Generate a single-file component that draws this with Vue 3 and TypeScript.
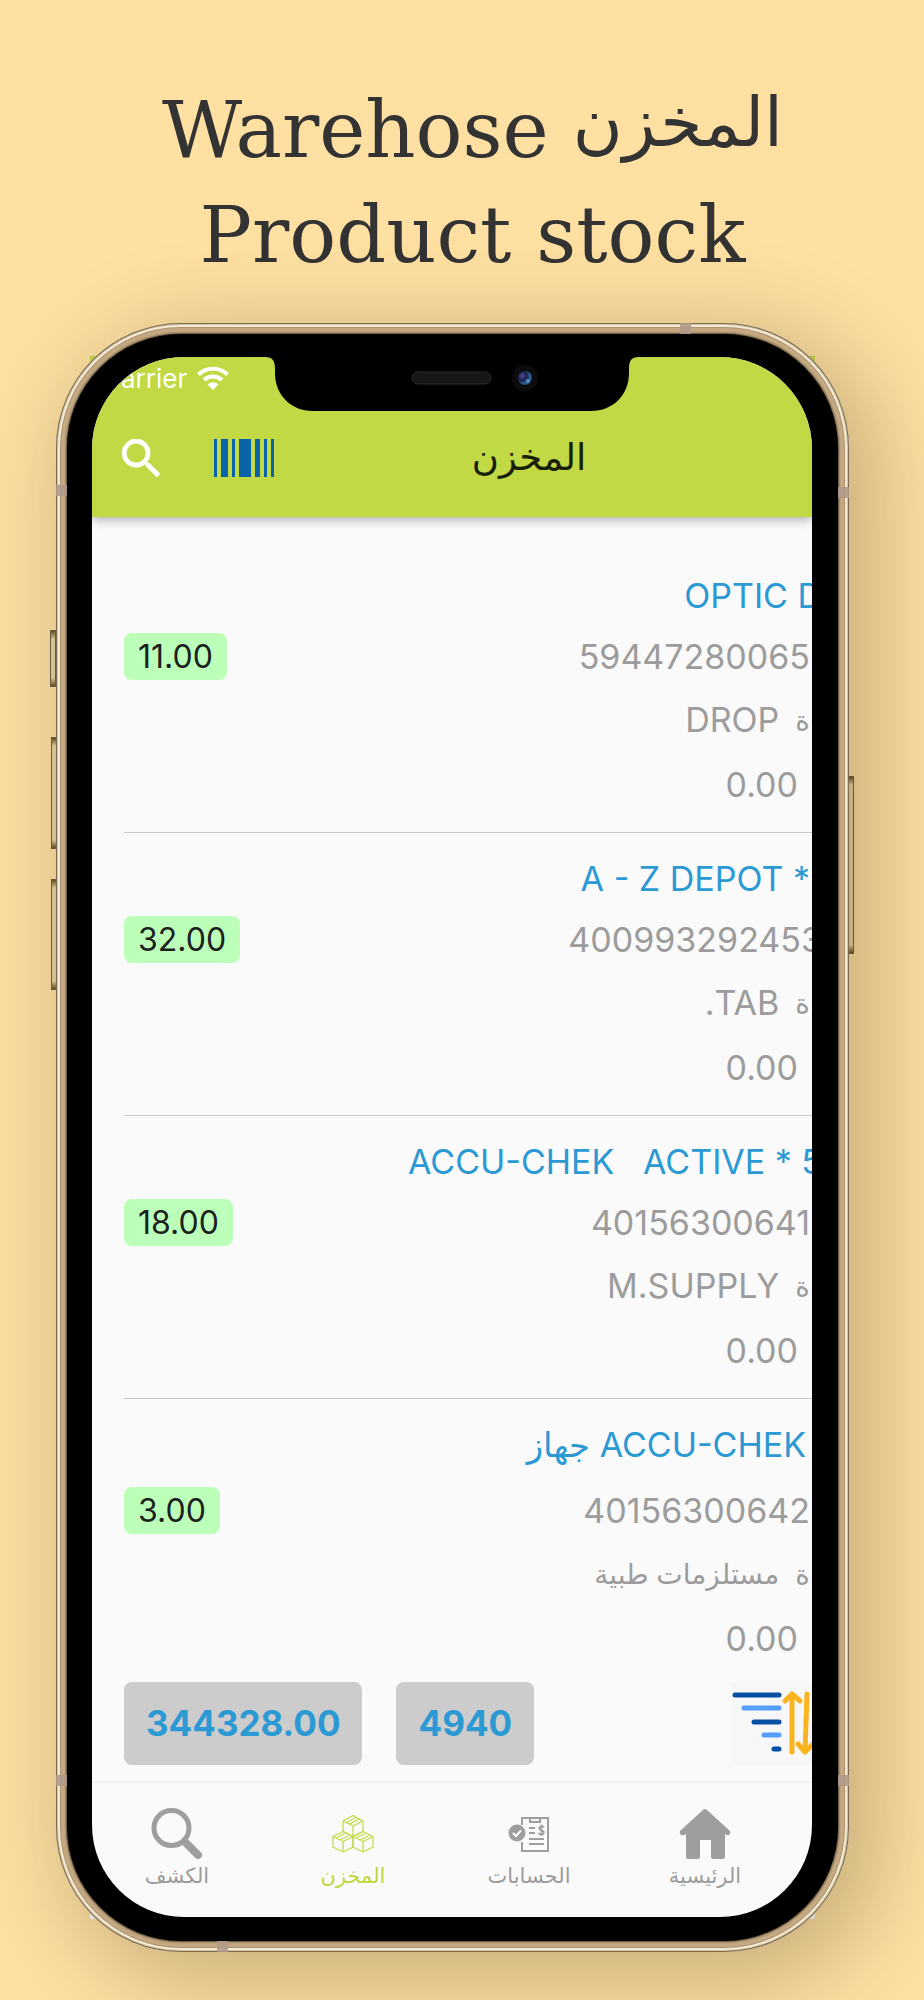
<script setup lang="ts">
interface Product {
  name: string
  nameDir: 'ltr' | 'rtl'
  fit: 'cut' | 'edge' | 'inset'
  barcode: string
  barcodeCut?: boolean
  category: string
  price: string
  quantity: string
}

const products: Product[] = [
  { name: 'OPTIC D', nameDir: 'ltr', fit: 'cut', barcode: '59447280065', category: 'DROP', price: '0.00', quantity: '11.00' },
  { name: 'A - Z DEPOT *', nameDir: 'ltr', fit: 'edge', barcode: '400993292453', barcodeCut: true, category: 'TAB.', price: '0.00', quantity: '32.00' },
  { name: 'ACCU-CHEK   ACTIVE * 5', nameDir: 'ltr', fit: 'cut', barcode: '40156300641', category: 'M.SUPPLY', price: '0.00', quantity: '18.00' },
  { name: 'ACCU-CHEK جهاز', nameDir: 'rtl', fit: 'inset', barcode: '40156300642', category: 'مستلزمات طبية', price: '0.00', quantity: '3.00' },
]
</script>

<template>
  <main class="stage">
    <h1 class="headline">
      <span class="headline-row"><span>Warehose</span> <span class="headline-ar">المخزن</span></span>
      <span>Product stock</span>
    </h1>

    <div class="phone">
      <i class="key key-mute"></i>
      <i class="key key-up"></i>
      <i class="key key-down"></i>
      <i class="key key-power"></i>
      <i class="band band-top"></i>
      <i class="band band-bottom"></i>
      <i class="band band-left-a"></i>
      <i class="band band-left-b"></i>
      <i class="band band-right-a"></i>
      <i class="band band-right-b"></i>

      <div class="bezel">
        <div class="screen">
          <svg class="notch" viewBox="0 0 374 55" width="374" height="55" aria-hidden="true">
            <defs>
              <radialGradient id="lens" cx="0.3" cy="0.35" r="0.8">
                <stop offset="0" stop-color="#5b4390" />
                <stop offset="0.4" stop-color="#16204f" />
                <stop offset="0.75" stop-color="#2f6593" />
                <stop offset="1" stop-color="#101c33" />
              </radialGradient>
            </defs>
            <path d="M0 0C8 0 10 4 10 12V16C10 38 26 54 48 54H326C348 54 364 38 364 16V12C364 4 366 0 374 0Z" />
            <rect x="147" y="15" width="79" height="12" rx="6" fill="#161616" stroke="#2b2b2b" />
            <circle cx="260" cy="21" r="13" fill="#0c0c0e" />
            <circle cx="260" cy="21" r="7" fill="url(#lens)" />
            <circle cx="263" cy="24" r="2" fill="#4d8fc0" />
          </svg>

          <header class="app-bar">
            <div class="status">
              <span>Carrier</span>
              <svg viewBox="0 0 32 24" width="32" height="24" aria-hidden="true">
                <path d="M1.500 8.500A21 21 0 0 1 30.500 8.500" />
                <path d="M7 14A13 13 0 0 1 25 14" />
                <path class="dot" d="M16 24L10.500 18.500A8 8 0 0 1 21.500 18.500Z" />
              </svg>
            </div>
            <div class="toolbar">
              <button type="button" aria-label="Search">
                <svg viewBox="3 3 17.500 17.500" width="38" height="38" fill="#fff" stroke="#fff" stroke-width="0.300">
                  <path d="M15.500 14h-.79l-.28-.27A6.470 6.470 0 0 0 16 9.500 6.500 6.500 0 1 0 9.500 16c1.610 0 3.090-.59 4.230-1.570l.27.28v.79l5 4.990L20.490 19l-4.990-5zm-6 0C7.010 14 5 11.990 5 9.500S7.010 5 9.500 5 14 7.010 14 9.500 11.990 14 9.500 14z" />
                </svg>
              </button>
              <button type="button" aria-label="Scan barcode">
                <svg viewBox="0 0 60 38" width="60" height="38" fill="#0a62a8">
                  <path d="M0 0h3v38H0zM7 0h7v38H7zM18 0h3v38h-3zM25 0h12v38H25zM41 0h5v38h-5zM50 0h3v38h-3zM57 0h3v38h-3z" />
                </svg>
              </button>
              <h2>المخزن</h2>
            </div>
          </header>

          <ul class="list">
            <li v-for="p in products" :key="p.barcode" :class="{ arabic: p.nameDir === 'rtl' }" dir="rtl">
              <div class="line name" :class="p.fit"><bdi :dir="p.nameDir">{{ p.name }}</bdi></div>
              <div class="line code">
                <bdi dir="ltr" :class="{ over: p.barcodeCut }">{{ p.barcode }}</bdi>
                <span class="badge">{{ p.quantity }}</span>
              </div>
              <div class="line category"><span>ة</span><bdi dir="rtl">{{ p.category }}</bdi></div>
              <div class="line price">{{ p.price }}</div>
            </li>
          </ul>

          <section class="totals">
            <output>344328.00</output>
            <output>4940</output>
            <button type="button" aria-label="Sort">
              <svg viewBox="0 0 96 83" width="96" height="83" fill="none" stroke-linecap="round">
                <rect width="96" height="83" fill="#f7f7f7" />
                <g stroke-width="5">
                  <path stroke="#064fa3" d="M4 13H48M23 40H48M43 67H48" />
                  <path stroke="#559ffb" d="M13 26H48M33 53H48" />
                </g>
                <path stroke="#fab41f" stroke-width="5" stroke-linejoin="round" d="M61 70V12M54 19L61 12L69 19M76 12L74 70M67 62L74 70L82 62" />
              </svg>
            </button>
          </section>

          <nav class="tabs">
            <a href="#lookup">
              <svg viewBox="0 0 52 52" width="52" height="52" fill="none" stroke="#9e9e9e">
                <circle cx="20.500" cy="20" r="17.500" stroke-width="5" />
                <path d="M35 35L47 47" stroke-width="8" stroke-linecap="round" />
                <path d="M32 32L36 36" stroke-width="5" />
              </svg>
              <span>الكشف</span>
            </a>
            <a href="#stock" class="active" aria-current="page">
              <svg viewBox="0 0 52 52" width="52" height="52" fill="none" stroke="#c0d944" stroke-width="1.200" stroke-linejoin="round">
                <path d="M16 13L26 7.500L36 13V23.500L26 28.500L16 23.500ZM16 13L26 18L36 13M26 18V28.500M19 15L29 9.500M22 16.500L32 11" />
                <path d="M6 28.500L16 23.500L26 28.500V39L16 44L6 39ZM6 28.500L16 33.500L26 28.500M16 33.500V44M9 30L19 25M13 32L23 27" />
                <path d="M26 28.500L36 23.500L46 28.500V39L36 44L26 39ZM26 28.500L36 33.500L46 28.500M36 33.500V44M29 30L39 25M33 32L43 27" />
              </svg>
              <span>المخزن</span>
            </a>
            <a href="#accounts">
              <svg viewBox="0 0 52 52" width="52" height="52" fill="none" stroke="#9e9e9e">
                <path d="M19 17V10H45V43H19V34" stroke-width="2" />
                <path d="M27 10V14H37V10M26 20H32M26 25H32M26 31H41M26 36H41" stroke-width="2" />
                <path d="M41 19C37 17 35 20 37 21.500S42 23 40.500 25.500 36 26 35.500 25M38.500 16.500V28" stroke-width="1.700" />
                <circle cx="14" cy="25" r="8.500" fill="#9e9e9e" stroke="none" />
                <path d="M10 25L13 28L18 22.500" stroke="#fff" stroke-width="2" />
              </svg>
              <span>الحسابات</span>
            </a>
            <a href="#home">
              <svg viewBox="0 0 52 52" width="52" height="52" fill="#9e9e9e">
                <path d="M26 1Q27 1 28 2L51 23Q52 25 50 27Q48 28 46 26V49Q46 51 44 51H34Q32 51 32 49V32H21V49Q21 51 19 51H9Q7 51 7 49V26Q4 28 2 27Q0 25 1 23L24 2Q25 1 26 1Z" />
              </svg>
              <span>الرئيسية</span>
            </a>
          </nav>
        </div>
      </div>
    </div>
  </main>
</template>

<style>
body {
  background: #fee0a2;
}
</style>

<style scoped>
* {
  box-sizing: border-box;
}
.stage {
  isolation: isolate;
  overflow: hidden;
  padding: 78px 75px 49px 56px;
  min-height: 2000px;
  background: #fee0a2;
  font-family: Inter, "DejaVu Sans", sans-serif;
}
.headline {
  display: flex;
  flex-direction: column;
  align-items: center;
  margin: 0 0 35px;
  padding-left: 40px;
  color: #333;
  font: 400 78px/105px "DejaVu Serif", "DejaVu Sans", serif;
  white-space: nowrap;
}
.headline-row {
  display: flex;
  gap: 24px;
}
.headline-ar {
  font-family: "DejaVu Sans", sans-serif;
  font-size: 68px;
  line-height: 90px;
}
.phone {
  position: relative;
  padding: 11px;
  border-radius: 125px;
  background: #c4a982;
  box-shadow:
    inset 0 0 0 1px #7b6b50,
    inset 0 0 0 2px #d4c6a4,
    inset 0 0 0 4px #f1e9d2,
    inset 0 0 0 5px #ac9370,
    20px 20px 90px 10px rgba(60, 45, 20, 0.28);
}
.phone::before {
  content: "";
  position: absolute;
  z-index: -1;
  inset: 33px 34px;
  background: linear-gradient(#c0d944 50%, #fff 50%);
}
.bezel {
  padding: 23px 26px 24px 25px;
  border-radius: 114px;
  background: #000;
  box-shadow: 0 0 2px 1px #54462f;
}
.screen {
  position: relative;
  overflow: hidden;
  border-radius: 92px;
  background: #fafafa;
}
.notch {
  position: absolute;
  top: 0;
  left: 50%;
  z-index: 2;
  margin-left: -187px;
}
.key {
  position: absolute;
  z-index: -1;
  width: 6px;
  border: 1px solid #6f6048;
  background: linear-gradient(#6a4f22, #e8d5a4 8px calc(100% - 8px), #6a4f22);
}
.key-mute {
  left: -6px;
  top: 307px;
  height: 57px;
}
.key-up {
  left: -5px;
  top: 414px;
  height: 112px;
}
.key-down {
  left: -5px;
  top: 556px;
  height: 111px;
}
.key-power {
  right: -5px;
  top: 453px;
  height: 178px;
}
.band {
  position: absolute;
  width: 11px;
  height: 11px;
  background: #b0998a;
  opacity: 0.9;
}
.band-top {
  top: 0;
  right: 158px;
}
.band-bottom {
  bottom: 0;
  left: 161px;
}
.band-left-a {
  top: 162px;
  left: 0;
}
.band-left-b {
  bottom: 166px;
  left: 0;
}
.band-right-a {
  top: 164px;
  right: 0;
}
.band-right-b {
  bottom: 166px;
  right: 0;
}
button {
  display: block;
  flex: none;
  margin: 0;
  padding: 0;
  border: 0;
  background: none;
}
svg {
  display: block;
  flex: none;
}
.app-bar {
  position: relative;
  background: #c0d944;
  box-shadow: 0 2px 10px rgba(0, 0, 0, 0.35);
}
.status {
  display: flex;
  align-items: center;
  gap: 10px;
  height: 42px;
  padding-left: 10px;
  color: #fff;
  font-size: 26px;
}
.status svg {
  fill: none;
  stroke: #fff;
  stroke-width: 4px;
}
.status .dot {
  fill: #fff;
  stroke: none;
}
.toolbar {
  display: flex;
  align-items: center;
  height: 118px;
  padding: 0 28px 0 30px;
}
.toolbar button + button {
  margin-left: 54px;
}
h2 {
  flex: 1;
  margin: 0;
  color: #191e09;
  font: 400 37px/60px "DejaVu Sans", sans-serif;
  text-align: center;
}
.list {
  margin: 0;
  padding: 33px 0 0 32px;
  list-style: none;
}
.list li {
  padding: 15px 0 16px;
  border-bottom: 1px solid #cbcbcb;
  color: #9c9c9c;
  font-size: 34px;
}
.list li:last-child {
  padding-bottom: 0;
  border-bottom: 0;
}
.line {
  display: flex;
  align-items: center;
  height: 64px;
  padding-right: 2px;
  white-space: pre;
}
.name {
  height: 61px;
  color: #2b99d3;
}
.name.cut {
  margin-right: -12px;
}
.name.inset {
  padding-right: 6px;
}
.arabic .name {
  margin-bottom: 5px;
}
.code {
  justify-content: space-between;
  height: 61px;
}
.over {
  margin-right: -12px;
}
.category {
  gap: 16px;
  height: 65px;
}
.category span,
.arabic .category {
  font-size: 28px;
}
.price {
  padding-right: 14px;
}
.badge {
  padding: 0 14px;
  border-radius: 8px;
  background: #bbffb9;
  color: #1d211d;
  font-size: 32px;
  line-height: 47px;
}
.totals {
  display: flex;
  align-items: center;
  height: 111px;
  padding: 12px 0 16px 32px;
  overflow: hidden;
}
.totals output {
  padding: 0 22px;
  border-radius: 8px;
  background: #ccc;
  color: #2b99d3;
  font-size: 35px;
  font-weight: 700;
  line-height: 83px;
}
.totals output + output {
  margin-left: 34px;
}
.totals button {
  margin-left: auto;
  margin-right: -15px;
}
.tabs {
  display: grid;
  grid-template-columns: repeat(4, 1fr);
  height: 136px;
  margin-left: -3px;
  padding: 25px 19px 0 0;
  border-top: 2px solid #f1f1f1;
}
.tabs a {
  display: flex;
  flex-direction: column;
  align-items: center;
  color: #9c9c9c;
  font: 400 21px/32px "DejaVu Sans", sans-serif;
  text-decoration: none;
}
.tabs .active {
  color: #bfd63f;
}
</style>
